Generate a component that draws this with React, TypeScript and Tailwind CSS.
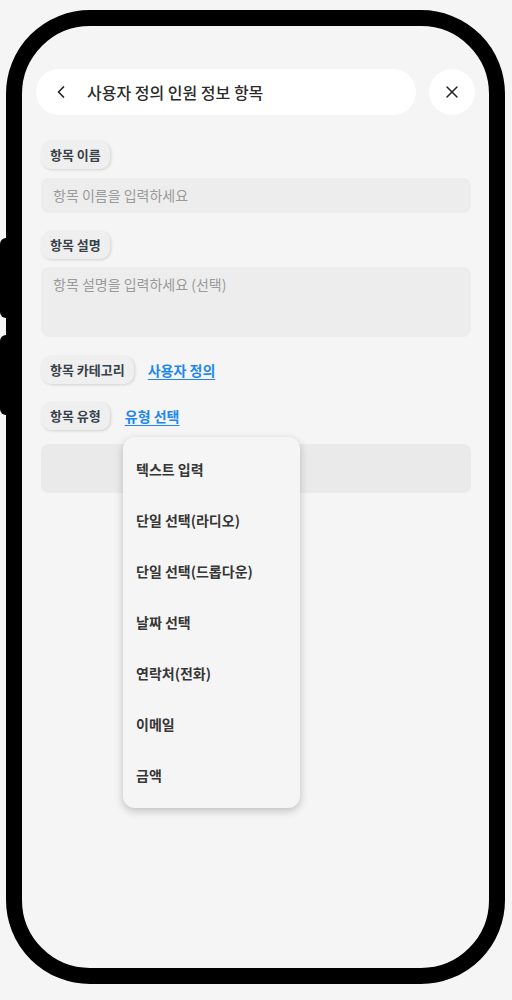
import { ChevronLeft, X } from "lucide-react";

const typeOptions = [
    "텍스트 입력",
    "단일 선택(라디오)",
    "단일 선택(드롭다운)",
    "날짜 선택",
    "연락처(전화)",
    "이메일",
    "금액",
];

function FieldLabel({ children }: { children: React.ReactNode }) {
    return (
        <span className="inline-flex h-[28px] items-center rounded-[10px] bg-[#efefef] px-[9px] text-[13px] font-semibold text-[#37424a] shadow-[1px_1px_3px_rgba(0,0,0,0.14)]">
            {children}
        </span>
    );
}

export default function App() {
    return (
        <div
            className="min-h-[1000px] bg-[#f5f5f5] pl-[6px] pt-[10px]"
            style={{ fontFamily: '"Noto Sans CJK KR", "Noto Sans", sans-serif' }}
        >
            <div className="relative h-[974px] w-[499px]">
                {/* side buttons */}
                <div className="absolute left-[-6px] top-[228px] h-[80px] w-[10px] rounded-l-[6px] bg-black" />
                <div className="absolute left-[-6px] top-[325px] h-[80px] w-[10px] rounded-l-[6px] bg-black" />

                <div className="relative h-full w-full overflow-hidden rounded-[84px] border-[16px] border-black bg-[#f5f5f5]">
                    <header className="flex gap-[13px] px-[14px] pt-[43px]">
                        <div className="flex h-[46px] flex-1 items-center rounded-full bg-white pl-[15px]">
                            <ChevronLeft size={20} strokeWidth={2} className="text-[#222]" />
                            <span className="ml-[16px] text-[16px] font-medium text-[#2b2b2b]">
                                사용자 정의 인원 정보 항목
                            </span>
                        </div>
                        <button
                            type="button"
                            className="flex h-[46px] w-[46px] items-center justify-center rounded-full bg-white text-[#222]"
                        >
                            <X size={20} strokeWidth={1.75} />
                        </button>
                    </header>

                    <div className="flex flex-col pl-[19px] pr-[18px] pt-[26px]">
                        <div>
                            <FieldLabel>항목 이름</FieldLabel>
                        </div>
                        <div className="mt-[9px] flex h-[35px] items-center rounded-[8px] bg-[#ededed] px-[12px] text-[14px] text-[#9a9a9a]">
                            항목 이름을 입력하세요
                        </div>

                        <div className="mt-[18px]">
                            <FieldLabel>항목 설명</FieldLabel>
                        </div>
                        <div className="mt-[8px] h-[70px] rounded-[8px] bg-[#ededed] px-[12px] pt-[7px] text-[14px] text-[#9a9a9a]">
                            항목 설명을 입력하세요 (선택)
                        </div>

                        <div className="mt-[19px] flex items-center gap-[14px]">
                            <FieldLabel>항목 카테고리</FieldLabel>
                            <span className="text-[14px] font-bold text-[#1e88f0] underline underline-offset-[3px]">
                                사용자 정의
                            </span>
                        </div>

                        <div className="relative mt-[18px] flex items-center gap-[15px]">
                            <FieldLabel>항목 유형</FieldLabel>
                            <span className="text-[14px] font-bold text-[#1e88f0] underline underline-offset-[3px]">
                                유형 선택
                            </span>

                            <ul className="absolute left-[82px] top-[35px] z-10 w-[177px] rounded-[12px] bg-[#f5f5f5] py-[7px] shadow-[0_3px_8px_rgba(0,0,0,0.22)]">
                                {typeOptions.map((option) => (
                                    <li
                                        key={option}
                                        className="flex h-[51px] items-center px-[13px] text-[14px] font-semibold text-[#363636]"
                                    >
                                        {option}
                                    </li>
                                ))}
                            </ul>
                        </div>

                        <div className="mt-[14px] h-[49px] rounded-[8px] bg-[#eaeaea]" />
                    </div>
                </div>
            </div>
        </div>
    );
}
